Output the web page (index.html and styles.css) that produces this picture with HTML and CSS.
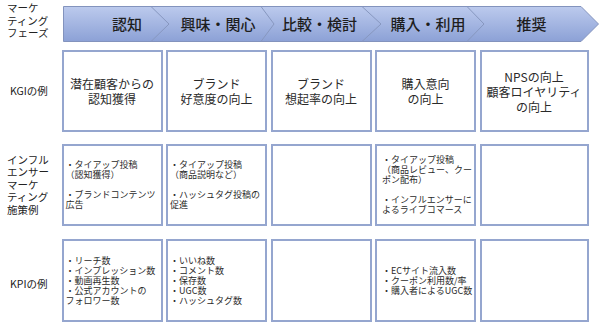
FILE: index.html
```html
<!DOCTYPE html>
<html lang="ja">
<head>
<meta charset="utf-8">
<link rel="stylesheet" href="styles.css">
</head>
<body>
<div class="sheet">
  <div class="row-label label-phase">マーケ<br>ティング<br>フェーズ</div>
  <div class="phase-band">
    <svg class="band-shape" viewBox="0 0 536 36" width="536" height="36" aria-hidden="true">
      <defs>
        <linearGradient id="bandGrad" x1="0" y1="0" x2="0" y2="1">
          <stop offset="0" stop-color="#bccaed"/>
          <stop offset="1" stop-color="#8ca1d6"/>
        </linearGradient>
      </defs>
      <polygon points="0.5,0.5 518,0.5 535.5,18 518,35.5 0.5,35.5" fill="url(#bandGrad)" stroke="#8393bd" stroke-width="1"/>
      <g fill="none" stroke="#8797bf" stroke-width="1">
        <polyline points="88,0.5 106,18 88,35.5"/>
        <polyline points="198,0.5 211,18 198,35.5"/>
        <polyline points="299,0.5 318,18 299,35.5"/>
        <polyline points="404,0.5 421,18 404,35.5"/>
      </g>
    </svg>
    <div class="phase-labels">
      <span class="phase p1">認知</span>
      <span class="phase p2">興味・関心</span>
      <span class="phase p3">比較・検討</span>
      <span class="phase p4">購入・利用</span>
      <span class="phase p5">推奨</span>
    </div>
  </div>

  <div class="row-label label-short row-kgi">KGIの例</div>
  <div class="cell kgi row-kgi">潜在顧客からの<br>認知獲得</div>
  <div class="cell kgi row-kgi">ブランド<br>好意度の向上</div>
  <div class="cell kgi row-kgi">ブランド<br>想起率の向上</div>
  <div class="cell kgi row-kgi">購入意向<br>の向上</div>
  <div class="cell kgi row-kgi">NPSの向上<br>顧客ロイヤリティ<br>の向上</div>

  <div class="row-label row-measure">インフル<br>エンサー<br>マーケ<br>ティング<br>施策例</div>
  <div class="cell list row-measure">・タイアップ投稿<br>（認知獲得）<br><br>・ブランドコンテンツ<br>広告</div>
  <div class="cell list row-measure">・タイアップ投稿<br>（商品説明など）<br><br>・ハッシュタグ投稿の<br>促進</div>
  <div class="cell list row-measure"></div>
  <div class="cell list wide-pad row-measure">・タイアップ投稿<br>（商品レビュー、クー<br>ポン配布）<br><br>・インフルエンサーに<br>よるライブコマース</div>
  <div class="cell list row-measure"></div>

  <div class="row-label label-short label-kpi row-kpi">KPIの例</div>
  <div class="cell list row-kpi">・リーチ数<br>・インプレッション数<br>・動画再生数<br>・公式アカウントの<br>フォロワー数</div>
  <div class="cell list row-kpi">・いいね数<br>・コメント数<br>・保存数<br>・UGC数<br>・ハッシュタグ数</div>
  <div class="cell list row-kpi"></div>
  <div class="cell list wide-pad row-kpi">・ECサイト流入数<br>・クーポン利用数/率<br>・購入者によるUGC数</div>
  <div class="cell list row-kpi"></div>
</div>
</body>
</html>
```

FILE: styles.css
```css
* {
  box-sizing: border-box;
}

html, body {
  margin: 0;
  padding: 0;
  background: #ffffff;
}

body {
  width: 600px;
  height: 323px;
  overflow: hidden;
  font-family: "Noto Sans CJK JP", "Noto Sans", sans-serif;
  color: #2b2b2b;
}

.sheet {
  display: grid;
  grid-template-columns: 58px 101px 101px 101px 101px 109px;
  grid-template-rows: 36px 90px 94px 96px;
  column-gap: 3.5px;
  padding-top: 6px;
}

.row-kgi { margin-top: 8px; }
.row-measure { margin-top: 12px; }
.row-kpi { margin-top: 13px; }

.row-label {
  display: flex;
  align-items: center;
  padding-left: 7px;
  font-size: 10.5px;
  line-height: 12.5px;
  color: #222;
}

.label-phase {
  align-items: flex-start;
  margin-top: -4px;
}

.label-short {
  padding-left: 10px;
}

.label-kpi {
  padding-top: 8px;
}

.phase-band {
  grid-column: 2 / -1;
  position: relative;
  width: 536px;
  height: 36px;
  margin-left: 1px;
}

.band-shape {
  position: absolute;
  left: 0;
  top: 0;
  display: block;
}

.phase-labels {
  position: relative;
  display: flex;
  height: 36px;
  align-items: center;
  padding-left: 23px;
}

.phase {
  font-size: 15px;
  font-weight: 500;
  color: #1e1e1e;
  text-align: center;
  white-space: nowrap;
  line-height: 36px;
}

.p1 { width: 83px; }
.p2 { width: 99px; }
.p3 { width: 104px; }
.p4 { width: 113px; }
.p5 { width: 94px; }

.cell {
  border: 2px solid #95a6cf;
  background: #fff;
  display: flex;
  align-items: center;
  white-space: nowrap;
}

.kgi {
  justify-content: center;
  text-align: center;
  font-size: 12px;
  line-height: 15px;
  color: #2a2a2a;
}

.list {
  font-size: 9px;
  line-height: 10px;
  padding: 0 2px;
  color: #2a2a2a;
}

.wide-pad {
  padding-left: 5px;
}
```
